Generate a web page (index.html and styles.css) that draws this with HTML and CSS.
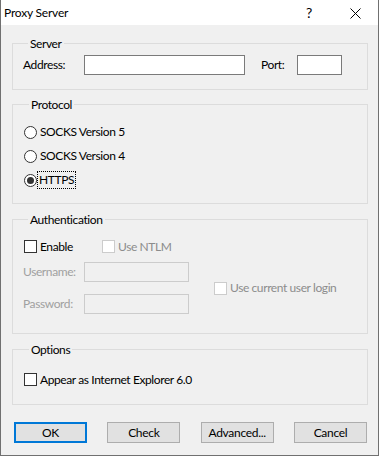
FILE: index.html
```html
<!DOCTYPE html>
<html lang="en">
<head>
    <meta charset="UTF-8">
    <title>Proxy Server</title>
    <link rel="stylesheet" href="styles.css">
</head>
<body>
    <div class="dialog">
        <div class="titlebar">
            <span class="title">Proxy Server</span>
            <span class="help">?</span>
            <span class="close">
                <svg width="11" height="11" viewBox="0 0 11 11">
                    <path d="M0.5 0.5 L10.5 10.5 M10.5 0.5 L0.5 10.5" stroke="#000" stroke-width="1" fill="none"/>
                </svg>
            </span>
        </div>

        <div class="content">
            <fieldset class="group group-server">
                <legend>Server</legend>
                <div class="server-row">
                    <span class="lbl lbl-address">Address:</span>
                    <span class="field field-address"></span>
                    <span class="lbl lbl-port">Port:</span>
                    <span class="field field-port"></span>
                </div>
            </fieldset>

            <fieldset class="group group-protocol">
                <legend>Protocol</legend>
                <div class="option-row"><span class="radio"></span><span class="opt-text">SOCKS Version 5</span></div>
                <div class="option-row"><span class="radio"></span><span class="opt-text">SOCKS Version 4</span></div>
                <div class="option-row"><span class="radio checked"></span><span class="opt-text focused">HTTPS</span></div>
            </fieldset>

            <fieldset class="group group-auth">
                <legend>Authentication</legend>
                <div class="auth-top">
                    <div class="check-item check-enable"><span class="check"></span><span class="opt-text">Enable</span></div>
                    <div class="check-item disabled"><span class="check"></span><span class="opt-text">Use NTLM</span></div>
                </div>
                <div class="auth-body">
                    <div class="cred-list">
                        <div class="cred-row">
                            <span class="lbl disabled">Username:</span>
                            <span class="field field-cred disabled"></span>
                        </div>
                        <div class="cred-row">
                            <span class="lbl disabled">Password:</span>
                            <span class="field field-cred disabled"></span>
                        </div>
                    </div>
                    <div class="check-item disabled check-login"><span class="check"></span><span class="opt-text">Use current user login</span></div>
                </div>
            </fieldset>

            <fieldset class="group group-options">
                <legend>Options</legend>
                <div class="check-item"><span class="check"></span><span class="opt-text">Appear as Internet Explorer 6.0</span></div>
            </fieldset>

            <div class="buttons">
                <button class="btn default">OK</button>
                <button class="btn">Check</button>
                <button class="btn">Advanced...</button>
                <button class="btn">Cancel</button>
            </div>
        </div>
    </div>
</body>
</html>
```

FILE: styles.css
```css
* {
    box-sizing: border-box;
}
body {
    margin: 0;
    font-family: Lato, "Noto Sans", Arial, sans-serif;
    font-size: 12px;
    letter-spacing: -0.4px;
    color: #000;
    background-color: #f0f0f0;
}
.dialog {
    width: 379px;
    height: 456px;
    background-color: #f0f0f0;
    border: 1px solid #707070;
    border-top: none;
    display: flex;
    flex-direction: column;
}
.titlebar {
    height: 25px;
    background-color: #fff;
    display: flex;
    align-items: center;
    padding-left: 3px;
}
.title {
    flex: 1;
    line-height: 16px;
    letter-spacing: -0.2px;
}
.help {
    font-size: 14px;
    width: 14px;
    margin-right: 30px;
    margin-top: -1px;
}
.close {
    display: flex;
    width: 11px;
    margin-right: 17px;
    margin-top: 1px;
}

.content {
    padding: 10px 10px 0 11px;
}
.group {
    margin: 0;
    padding: 0;
    border: 1px solid #dcdcdc;
    min-inline-size: 0;
}
.group legend {
    padding: 0 2px;
    margin-left: 5px;
    line-height: 17px;
}
.group-protocol { margin-top: 6px; padding: 7px 0 11px 11px; }
.group-auth { margin-top: 7px; padding: 12px 0 19px 10px; }
.group-options { margin-top: 7px; padding: 15px 0 18px 11px; }
.group-server { padding: 3px 0 14px 10px; }

.lbl {
    line-height: 16px;
}
.disabled {
    color: #a0a0a0;
}
.field {
    display: block;
    height: 20px;
    background-color: #fff;
    border: 1px solid #7a7a7a;
}
.field.disabled {
    background-color: #f0f0f0;
    border-color: #cccccc;
}

.server-row {
    display: flex;
    align-items: center;
}
.lbl-address { width: 61px; }
.field-address { width: 161px; }
.lbl-port { margin-left: 16px; width: 36px; }
.field-port { width: 45px; }

.option-row {
    display: flex;
    align-items: center;
    height: 24px;
}
.radio {
    width: 13px;
    height: 13px;
    border: 1px solid #333;
    border-radius: 50%;
    background-color: #fff;
    display: flex;
    align-items: center;
    justify-content: center;
}
.radio.checked::after {
    content: "";
    width: 7px;
    height: 7px;
    border-radius: 50%;
    background-color: #333;
}
.opt-text {
    margin-left: 3px;
    line-height: 16px;
}
.focused {
    margin-left: 1px;
    padding: 0 1px;
    outline: 1px dotted #000;
}

.check-item {
    display: flex;
    align-items: center;
    height: 13px;
}
.check {
    width: 13px;
    height: 13px;
    border: 1px solid #333;
    background-color: #fff;
}
.check-item.disabled .check {
    border-color: #cccccc;
}
.check-item.disabled .opt-text {
    color: #8c8c8c;
}
.auth-top {
    display: flex;
    padding-left: 1px;
}
.check-enable { width: 78px; }

.auth-body {
    display: flex;
    align-items: center;
    margin-top: 9px;
}
.cred-list {
    display: flex;
    flex-direction: column;
    gap: 12px;
}
.cred-row {
    display: flex;
    align-items: center;
}
.cred-row .lbl { width: 61px; }
.field-cred { width: 105px; }
.check-login { margin-left: 25px; }

.buttons {
    display: flex;
    justify-content: space-between;
    margin-top: 17px;
    padding: 0 1px 0 2px;
}
.btn {
    width: 73px;
    height: 21px;
    padding: 0;
    font-family: inherit;
    font-size: 12px;
    letter-spacing: -0.3px;
    color: #000;
    background-color: #e1e1e1;
    border: 1px solid #adadad;
    border-radius: 0;
}
.btn.default {
    border: 2px solid #0078d7;
}
```
